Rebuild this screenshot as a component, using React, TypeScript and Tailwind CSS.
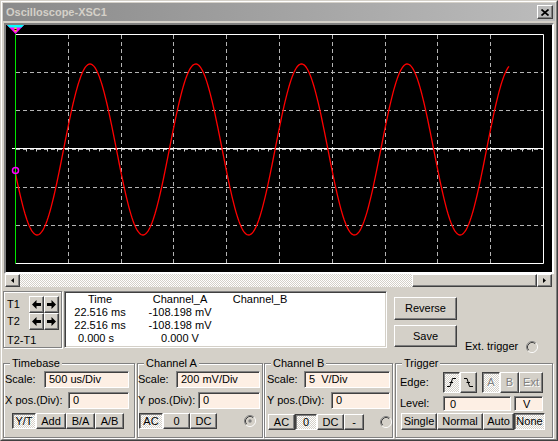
import React from "react";

const raised =
  "border border-t-white border-l-white border-r-[#404040] border-b-[#404040] shadow-[inset_-1px_-1px_0_#808080]";
const pressed =
  "border border-t-[#404040] border-l-[#404040] border-r-white border-b-white shadow-[inset_1px_1px_0_#808080] bg-[image:repeating-conic-gradient(#ffffff_0_25%,#d4d0c8_0_50%)] bg-[length:2px_2px]";
const field =
  "border border-t-[#808080] border-l-[#808080] border-r-white border-b-white shadow-[inset_1px_1px_0_#404040] bg-[#fdefe4]";
const etched = "border border-[#808080] shadow-[inset_1px_1px_0_#ffffff,1px_1px_0_#ffffff]";
const dim = "text-[#808080] [text-shadow:1px_1px_0_#ffffff]";

function Btn({ className = "", on, off, children }: { className?: string; on?: boolean; off?: boolean; children?: React.ReactNode }) {
  return (
    <div className={`flex items-center justify-center shrink-0 ${on ? pressed : raised} ${off ? dim : ""} ${className}`}>
      {children}
    </div>
  );
}

function Field({ className = "", children }: { className?: string; children?: React.ReactNode }) {
  return <div className={`flex items-center shrink-0 ${field} ${className}`}>{children}</div>;
}

function Radio({ dot }: { dot?: boolean }) {
  return (
    <svg width="12" height="12" viewBox="0 0 12 12" className="block shrink-0">
      <circle cx="6" cy="6" r="4" fill="#d4d0c8" />
      <path d="M2.11 9.89A5.5 5.5 0 0 1 9.89 2.11" stroke="#808080" fill="none" />
      <path d="M9.89 2.11A5.5 5.5 0 0 1 2.11 9.89" stroke="#ffffff" fill="none" />
      <path d="M2.82 9.18A4.5 4.5 0 0 1 9.18 2.82" stroke="#404040" fill="none" />
      <path d="M9.18 2.82A4.5 4.5 0 0 1 2.82 9.18" stroke="#d4d0c8" fill="none" />
      {dot && <circle cx="6" cy="6" r="1.7" fill="#808080" />}
    </svg>
  );
}

function Arrow({ dir }: { dir: "l" | "r" }) {
  return (
    <svg width="9" height="9" viewBox="0 0 9 9" className="block">
      <polygon
        points={dir === "l" ? "0,4.5 4.5,0 4.5,3 9,3 9,6 4.5,6 4.5,9" : "9,4.5 4.5,0 4.5,3 0,3 0,6 4.5,6 4.5,9"}
        fill="#000"
      />
    </svg>
  );
}

function Group({ title, className = "", children }: { title: string; className?: string; children: React.ReactNode }) {
  return (
    <fieldset className={`h-[81px] shrink-0 min-w-0 ${etched} ${className}`}>
      <legend className="ml-[6px] px-[2px] bg-[#d4d0c8] leading-[13px]">{title}</legend>
      {children}
    </fieldset>
  );
}

function Scope() {
  const pts: string[] = [];
  for (let x = 15; x <= 509; x++) {
    const y = 149.5 - 85.5 * Math.cos((2 * Math.PI * (x - 90)) / 105.75);
    pts.push(`${x - 6},${(y - 25).toFixed(1)}`);
  }
  const vx = Array.from({ length: 9 }, (_, i) => Math.round(9 + 52.8 * (i + 1)) + 0.5);
  const hy = Array.from({ length: 5 }, (_, j) => Math.round(9 + 38.17 * (j + 1)) + 0.5);
  const ticks = Array.from({ length: 51 }, (_, k) => Math.round(9 + 10.56 * k) + 0.5);
  return (
    <svg width="546" height="247" viewBox="0 0 546 247" className="block">
      <rect width="546" height="247" fill="#000" />
      {vx.map((x) => (
        <line key={x} x1={x} y1="10" x2={x} y2="238" stroke="#b4b4b4" strokeDasharray="4 3" />
      ))}
      {hy.map((y) => (
        <line key={y} x1="10" y1={y} x2="537" y2={y} stroke="#b4b4b4" strokeDasharray="4 3" />
      ))}
      {ticks.map((x) => (
        <line key={x} x1={x} y1="124" x2={x} y2="126.5" stroke="#d0d0d0" />
      ))}
      <path d="M9.5 9.5H537.5V238.5H9.5" stroke="#fff" fill="none" />
      <line x1="6" y1="123.5" x2="537.5" y2="123.5" stroke="#fff" />
      <polyline points={pts.join(" ")} stroke="#ff0000" strokeWidth="1.3" fill="none" />
      <line x1="9.5" y1="9.5" x2="9.5" y2="238.5" stroke="#00e600" />
      <circle cx="9.5" cy="145.5" r="3" stroke="#ff00ff" strokeWidth="1.5" fill="none" />
      <polygon points="1,0 18,0 9.5,9" fill="#ff00ff" />
      <polygon points="1,0 18,0 15.6,2.5 3.4,2.5" fill="#00ffff" />
      <rect x="8.5" y="2.5" width="2" height="4" fill="#e8e800" />
      <rect x="8.5" y="4" width="2" height="1" fill="#000" />
    </svg>
  );
}

export default function App() {
  return (
    <div className="w-[558px] h-[441px] bg-[#d4d0c8] font-['Liberation_Sans',Arial,sans-serif] text-[11px] leading-[13px] text-black overflow-hidden select-none">
      <div className="h-full border border-t-[#d4d0c8] border-l-[#d4d0c8] border-r-[#404040] border-b-[#404040]">
        <div className="h-full border border-t-white border-l-white border-r-[#808080] border-b-[#808080] p-px flex flex-col">
          {/* title bar */}
          <div className="h-[18px] shrink-0 flex items-center bg-gradient-to-r from-[#8a8a8a] to-[#bcbcbc]">
            <span className="pl-[3px] font-bold text-[11px] text-[#d4d0c8]">Oscilloscope-XSC1</span>
            <Btn className="ml-auto mr-[2px] w-[16px] h-[14px]">
              <svg width="8" height="7" viewBox="0 0 8 7" className="block">
                <path d="M0.5 0.5L7.5 6.5M7.5 0.5L0.5 6.5" stroke="#000" strokeWidth="1.7" />
              </svg>
            </Btn>
          </div>

          {/* screen */}
          <div className="mt-[2px] mx-px shrink-0 border-2 border-t-[#808080] border-l-[#808080] border-r-white border-b-white">
            <Scope />
          </div>

          {/* scrollbar */}
          <div className="h-[13px] ml-[2px] mr-[3px] shrink-0 flex">
            <Btn className="w-[15px] h-full">
              <svg width="3" height="5" viewBox="0 0 3 5" className="block"><polygon points="3,0 3,5 0,2.5" fill="#000" /></svg>
            </Btn>
            <div className="flex-1 bg-[image:repeating-conic-gradient(#ffffff_0_25%,#d4d0c8_0_50%)] bg-[length:2px_2px]" />
            <Btn className="w-[125px] h-full" />
            <Btn className="w-[15px] h-full">
              <svg width="3" height="5" viewBox="0 0 3 5" className="block"><polygon points="0,0 0,5 3,2.5" fill="#000" /></svg>
            </Btn>
          </div>

          {/* cursors and readout */}
          <div className="mt-[4px] h-[57px] shrink-0 flex">
            <div className={`w-[59px] h-full shrink-0 pl-[3px] pt-[4px] ${etched}`}>
              <div className="flex items-center h-[17px]">
                <span className="w-[22px]">T1</span>
                <Btn className="w-[15px] h-[17px]"><Arrow dir="l" /></Btn>
                <Btn className="w-[15px] h-[17px]"><Arrow dir="r" /></Btn>
              </div>
              <div className="flex items-center h-[17px]">
                <span className="w-[22px]">T2</span>
                <Btn className="w-[15px] h-[17px]"><Arrow dir="l" /></Btn>
                <Btn className="w-[15px] h-[17px]"><Arrow dir="r" /></Btn>
              </div>
              <div className="mt-[4px]">T2-T1</div>
            </div>

            <div className="ml-[2px] w-[323px] h-full shrink-0 bg-white pl-px pt-[1px] border border-t-[#808080] border-l-[#808080] border-r-white border-b-white shadow-[inset_1px_1px_0_#404040,inset_-1px_-1px_0_#d4d0c8]">
              <div className="grid grid-cols-[68px_92px_68px] text-center">
                <span>Time</span>
                <span>Channel_A</span>
                <span>Channel_B</span>
                <span>22.516 ms</span>
                <span>-108.198 mV</span>
                <span />
                <span>22.516 ms</span>
                <span>-108.198 mV</span>
                <span />
                <span className="pr-[8px]">0.000 s</span>
                <span>0.000 V</span>
                <span />
              </div>
            </div>

            <div className="ml-[7px] w-[63px] shrink-0 pt-[6px]">
              <Btn className="w-full h-[23px]">Reverse</Btn>
              <Btn className="w-full h-[22px] mt-[5px]">Save</Btn>
            </div>

            <div className="ml-[8px] pt-[49px] flex items-start gap-[8px]">
              <span>Ext. trigger</span>
              <div className="pt-px"><Radio /></div>
            </div>
          </div>

          {/* control groups */}
          <div className="mt-[9px] flex shrink-0">
            <Group title="Timebase" className="w-[132px]">
              <div className="flex items-center h-[17px] mt-px pl-px">
                <span>Scale:</span>
                <Field className="ml-auto mr-[5px] w-[85px] h-[17px] pl-[4px]">500 us/Div</Field>
              </div>
              <div className="flex items-center h-[17px] mt-[4px] pl-px">
                <span>X pos.(Div):</span>
                <Field className="ml-auto mr-[5px] w-[61px] h-[17px] pl-[4px]">0</Field>
              </div>
              <div className="flex h-[16px] mt-[4px] pl-[8px]">
                <Btn on className="w-[24px] h-full">Y/T</Btn>
                <Btn className="w-[30px] h-full">Add</Btn>
                <Btn className="w-[29px] h-full">B/A</Btn>
                <Btn className="w-[29px] h-full">A/B</Btn>
              </div>
            </Group>

            <Group title="Channel A" className="ml-[2px] w-[126px]">
              <div className="flex items-center h-[17px] mt-px">
                <span>Scale:</span>
                <Field className="ml-auto mr-[2px] w-[84px] h-[17px] pl-[4px]">200 mV/Div</Field>
              </div>
              <div className="flex items-center h-[17px] mt-[4px]">
                <span>Y pos.(Div):</span>
                <Field className="ml-auto mr-[2px] w-[62px] h-[17px] pl-[4px]">0</Field>
              </div>
              <div className="flex items-center h-[16px] mt-[4px] pl-px">
                <Btn on className="w-[24px] h-full">AC</Btn>
                <Btn className="w-[27px] h-full">0</Btn>
                <Btn className="w-[27px] h-full">DC</Btn>
                <div className="ml-auto mr-[6px]"><Radio dot /></div>
              </div>
            </Group>

            <Group title="Channel B" className="ml-px w-[129px]">
              <div className="flex items-center h-[17px] mt-px pl-[2px]">
                <span>Scale:</span>
                <Field className="ml-auto mr-[2px] w-[86px] h-[17px] pl-[4px]">5 &nbsp;V/Div</Field>
              </div>
              <div className="flex items-center h-[17px] mt-[4px] pl-[2px]">
                <span>Y pos.(Div):</span>
                <Field className="ml-auto mr-[2px] w-[59px] h-[17px] pl-[4px]">0</Field>
              </div>
              <div className="flex items-center h-[16px] mt-[5px] pl-[3px]">
                <Btn className="w-[27px] h-full">AC</Btn>
                <Btn on className="w-[22px] h-full">0</Btn>
                <Btn className="w-[27px] h-full">DC</Btn>
                <Btn className="w-[20px] h-full">-</Btn>
                <div className="ml-auto"><Radio /></div>
              </div>
            </Group>

            <Group title="Trigger" className="ml-[2px] w-[158px]">
              <div className="flex items-center h-[21px] mt-[2px]">
                <span className="w-[47px] pl-[4px]">Edge:</span>
                <Btn on className="w-[17px] h-full">
                  <svg width="9" height="9" viewBox="0 0 9 9" className="block">
                    <path d="M0 8.5H3L5.5 0.5H9M2.5 4.5H6" stroke="#000" fill="none" />
                  </svg>
                </Btn>
                <Btn className="w-[17px] h-full">
                  <svg width="9" height="9" viewBox="0 0 9 9" className="block">
                    <path d="M0 0.5H3L5.5 8.5H9M2.5 4.5H6" stroke="#000" fill="none" />
                  </svg>
                </Btn>
                <Btn on off className="ml-[5px] w-[18px] h-full">A</Btn>
                <Btn off className="w-[19px] h-full">B</Btn>
                <Btn off className="w-[24px] h-full">Ext</Btn>
              </div>
              <div className="flex items-center h-[15px] mt-[3px]">
                <span className="w-[47px] pl-[4px]">Level:</span>
                <Field className="w-[68px] h-full pl-[6px] pt-[2px]">0</Field>
                <Field className="ml-[3px] w-[29px] h-full pl-[8px] pt-[2px]">V</Field>
              </div>
              <div className="flex h-[17px] mt-[2px] pl-[5px]">
                <Btn className="w-[36px] h-full">Single</Btn>
                <Btn className="w-[46px] h-full">Normal</Btn>
                <Btn className="w-[31px] h-full">Auto</Btn>
                <Btn on className="w-[31px] h-full">None</Btn>
              </div>
            </Group>
          </div>
        </div>
      </div>
    </div>
  );
}
